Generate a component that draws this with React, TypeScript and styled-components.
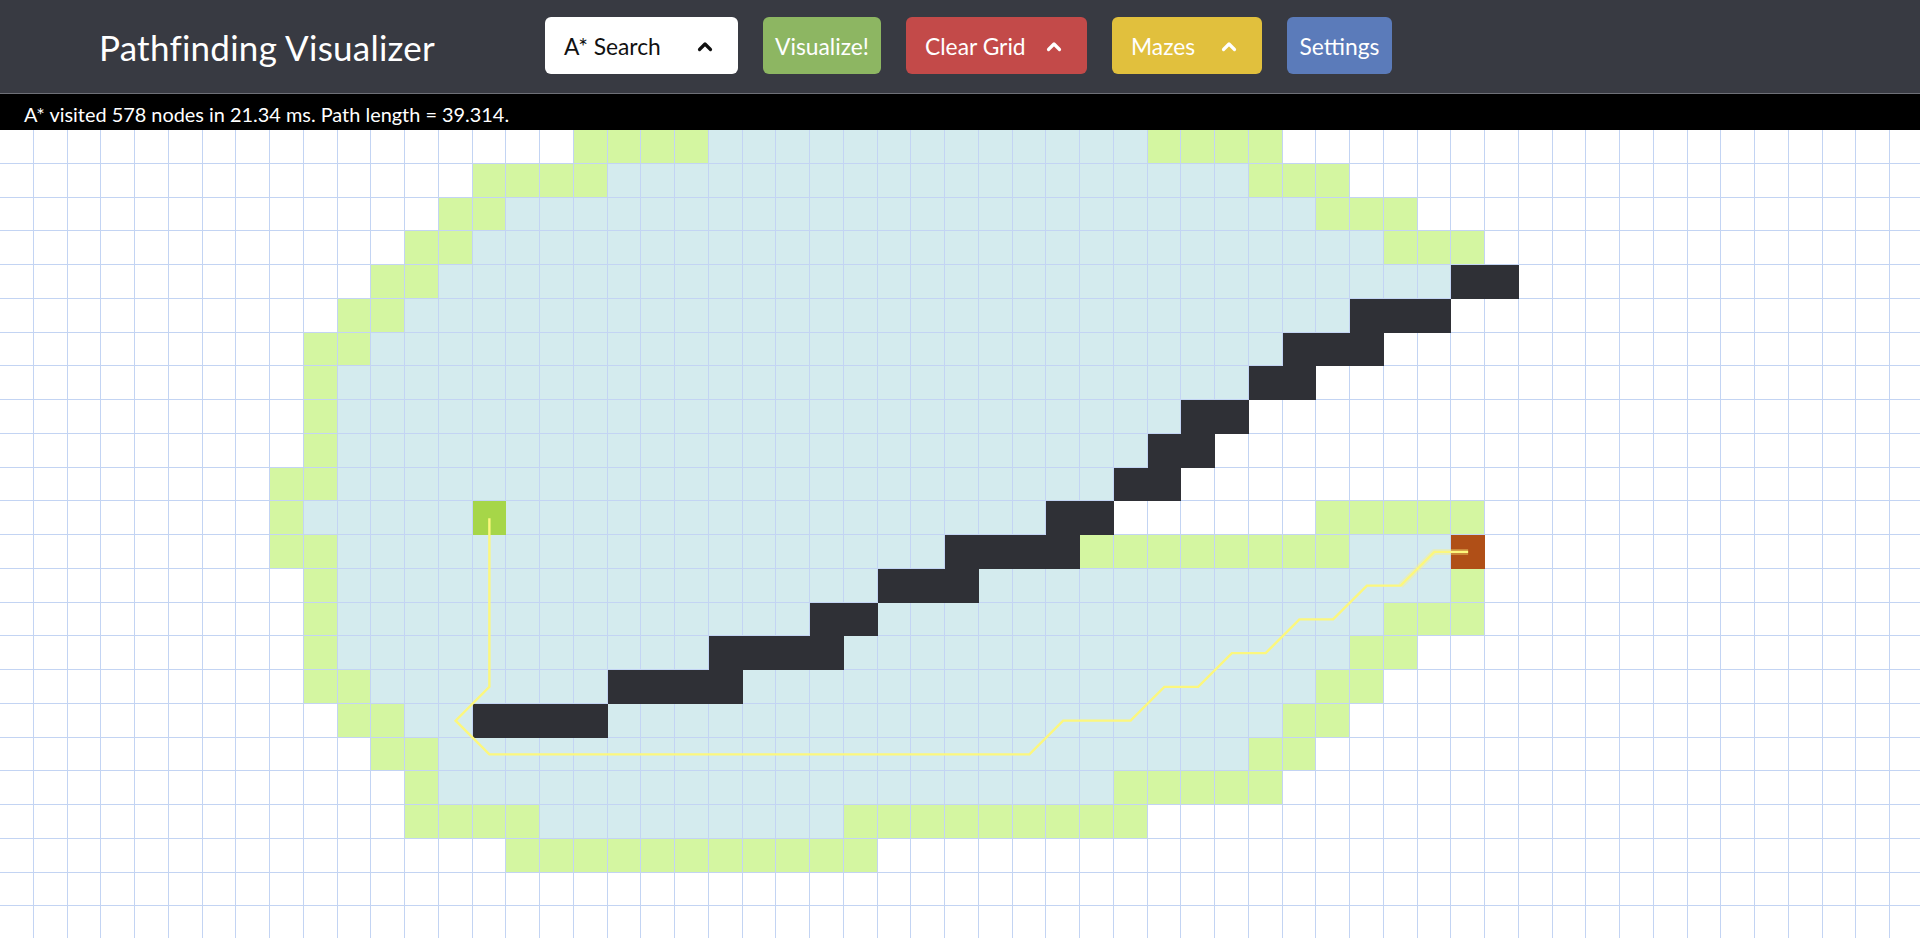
import React from "react";
import styled, { createGlobalStyle } from "styled-components";

const CELL = 33.75;
const COLS = 57;
const ROWS = 24;

type Kind = "empty" | "visited" | "frontier" | "wall" | "start" | "end";

const FONT = `"Lato", "Liberation Sans", sans-serif`;

const COLORS: Record<Kind, string> = {
  empty: "#ffffff",
  visited: "#d4ebee",
  frontier: "#d4f6a1",
  wall: "#2f3036",
  start: "#a6d648",
  end: "#b04f17",
};

const LINE = "#c3d4f3";

// [row, fromCol, toCol, kind]
const SEGMENTS: [number, number, number, Kind][] = [
  [0, 17, 20, "frontier"], [0, 21, 33, "visited"], [0, 34, 37, "frontier"],
  [1, 14, 17, "frontier"], [1, 18, 36, "visited"], [1, 37, 39, "frontier"],
  [2, 13, 14, "frontier"], [2, 15, 38, "visited"], [2, 39, 41, "frontier"],
  [3, 12, 13, "frontier"], [3, 14, 40, "visited"], [3, 41, 43, "frontier"],
  [4, 11, 12, "frontier"], [4, 13, 42, "visited"], [4, 43, 44, "wall"],
  [5, 10, 11, "frontier"], [5, 12, 39, "visited"], [5, 40, 42, "wall"],
  [6, 9, 10, "frontier"], [6, 11, 37, "visited"], [6, 38, 40, "wall"],
  [7, 9, 9, "frontier"], [7, 10, 36, "visited"], [7, 37, 38, "wall"],
  [8, 9, 9, "frontier"], [8, 10, 34, "visited"], [8, 35, 36, "wall"],
  [9, 9, 9, "frontier"], [9, 10, 33, "visited"], [9, 34, 35, "wall"],
  [10, 8, 9, "frontier"], [10, 10, 32, "visited"], [10, 33, 34, "wall"],
  [11, 8, 8, "frontier"], [11, 9, 30, "visited"], [11, 14, 14, "start"], [11, 31, 32, "wall"], [11, 39, 43, "frontier"],
  [12, 8, 9, "frontier"], [12, 10, 27, "visited"], [12, 28, 31, "wall"], [12, 32, 39, "frontier"], [12, 40, 42, "visited"], [12, 43, 43, "end"],
  [13, 9, 9, "frontier"], [13, 10, 25, "visited"], [13, 26, 28, "wall"], [13, 29, 42, "visited"], [13, 43, 43, "frontier"],
  [14, 9, 9, "frontier"], [14, 10, 23, "visited"], [14, 24, 25, "wall"], [14, 26, 40, "visited"], [14, 41, 43, "frontier"],
  [15, 9, 9, "frontier"], [15, 10, 20, "visited"], [15, 21, 24, "wall"], [15, 25, 39, "visited"], [15, 40, 41, "frontier"],
  [16, 9, 10, "frontier"], [16, 11, 17, "visited"], [16, 18, 21, "wall"], [16, 22, 38, "visited"], [16, 39, 40, "frontier"],
  [17, 10, 11, "frontier"], [17, 12, 13, "visited"], [17, 14, 17, "wall"], [17, 18, 37, "visited"], [17, 38, 39, "frontier"],
  [18, 11, 12, "frontier"], [18, 13, 36, "visited"], [18, 37, 38, "frontier"],
  [19, 12, 12, "frontier"], [19, 13, 32, "visited"], [19, 33, 37, "frontier"],
  [20, 12, 15, "frontier"], [20, 16, 24, "visited"], [20, 25, 33, "frontier"],
  [21, 15, 25, "frontier"],
];

const PATH: [number, number][] = [
  [11, 14], [16, 14], [17, 13], [18, 14], [18, 30], [17, 31], [17, 33], [16, 34],
  [16, 35], [15, 36], [15, 37], [14, 38], [14, 39], [13, 40], [13, 41], [12, 42], [12, 43],
];

function buildGrid(): Kind[][] {
  const g: Kind[][] = Array.from({ length: ROWS }, () =>
    Array.from({ length: COLS }, () => "empty" as Kind)
  );
  for (const [r, a, b, k] of SEGMENTS) {
    for (let c = a; c <= b; c++) g[r][c] = k;
  }
  return g;
}

const toPoints = (pts: [number, number][]) =>
  pts.map(([r, c]) => `${(c + 0.5) * CELL},${(r + 0.5) * CELL}`).join(" ");

const GlobalStyle = createGlobalStyle`
  html, body {
    margin: 0;
    padding: 0;
    overflow: hidden;
    background: #ffffff;
  }
  body {
    font-family: ${FONT};
  }
`;

const Page = styled.div`
  width: 1920px;
  height: 938px;
  overflow: hidden;
  display: flex;
  flex-direction: column;
`;

const Header = styled.header`
  box-sizing: border-box;
  height: 94px;
  flex-shrink: 0;
  background: #383a42;
  border-bottom: 1px solid #6e7077;
  display: flex;
  align-items: flex-start;
  padding: 17px 0 0 99px;
`;

const Brand = styled.div`
  width: 446px;
  flex-shrink: 0;
  height: 57px;
  display: flex;
  align-items: center;
  color: #ffffff;
  font-family: ${FONT};
  font-size: 35px;
  font-weight: 400;
  letter-spacing: 0.25px;
  padding-top: 3px;
  box-sizing: border-box;
`;

const Toolbar = styled.nav`
  display: flex;
  gap: 25px;
`;

type Tone = "white" | "green" | "red" | "yellow" | "blue";

const TONES: Record<Tone, { bg: string; fg: string }> = {
  white: { bg: "#ffffff", fg: "#111111" },
  green: { bg: "#8db662", fg: "#ffffff" },
  red: { bg: "#c34a49", fg: "#ffffff" },
  yellow: { bg: "#e1c03d", fg: "#ffffff" },
  blue: { bg: "#5b7bba", fg: "#ffffff" },
};

const Button = styled.button<{ $tone: Tone; $width: number; $menu?: boolean }>`
  box-sizing: border-box;
  width: ${(p) => p.$width}px;
  height: 57px;
  border: none;
  border-radius: 6px;
  background: ${(p) => TONES[p.$tone].bg};
  color: ${(p) => TONES[p.$tone].fg};
  font-family: ${FONT};
  font-size: 22.8px;
  font-weight: 400;
  display: flex;
  align-items: center;
  justify-content: ${(p) => (p.$menu ? "space-between" : "center")};
  padding: ${(p) => (p.$menu ? "0 25px 0 19px" : "0")};
  cursor: pointer;
`;

const Label = styled.span`
  line-height: 1;
  padding-top: 1px;
`;

const Chevron = ({ color }: { color: string }) => (
  <svg width="16" height="12" viewBox="0 0 16 12" aria-hidden="true">
    <polyline
      points="2.5,9.5 8,4 13.5,9.5"
      fill="none"
      stroke={color}
      strokeWidth="3.2"
      strokeLinecap="round"
      strokeLinejoin="round"
    />
  </svg>
);

const StatusBar = styled.div`
  box-sizing: border-box;
  height: 36px;
  flex-shrink: 0;
  background: #000000;
  color: #ffffff;
  font-family: ${FONT};
  font-size: 19.9px;
  line-height: 36px;
  padding: 2px 0 0 24px;
  white-space: nowrap;
`;

const Board = styled.div`
  position: relative;
  width: ${COLS * CELL}px;
  height: ${ROWS * CELL}px;
  flex-shrink: 0;
`;

const Grid = styled.div`
  display: grid;
  grid-template-columns: repeat(${COLS}, ${CELL}px);
  grid-auto-rows: ${CELL}px;
`;

const solid = (k: Kind) => k === "wall" || k === "start" || k === "end";

const Cell = styled.div<{ $kind: Kind }>`
  box-sizing: border-box;
  background: ${(p) => COLORS[p.$kind]};
  border-right: 1px solid ${(p) => (solid(p.$kind) ? COLORS[p.$kind] : LINE)};
  border-bottom: 1px solid ${(p) => (solid(p.$kind) ? COLORS[p.$kind] : LINE)};
`;

const PathLayer = styled.svg`
  position: absolute;
  left: 0;
  top: 0;
  pointer-events: none;
  overflow: visible;
`;

export default function App() {
  const grid = buildGrid();
  const w = COLS * CELL;
  const h = ROWS * CELL;
  return (
    <Page>
      <GlobalStyle />
      <Header>
        <Brand>Pathfinding Visualizer</Brand>
        <Toolbar>
          <Button $tone="white" $width={193} $menu>
            <Label>A* Search</Label>
            <Chevron color="#111111" />
          </Button>
          <Button $tone="green" $width={118}>
            <Label>Visualize!</Label>
          </Button>
          <Button $tone="red" $width={181} $menu>
            <Label>Clear Grid</Label>
            <Chevron color="#ffffff" />
          </Button>
          <Button $tone="yellow" $width={150} $menu>
            <Label>Mazes</Label>
            <Chevron color="#ffffff" />
          </Button>
          <Button $tone="blue" $width={105}>
            <Label>Settings</Label>
          </Button>
        </Toolbar>
      </Header>
      <StatusBar>A* visited 578 nodes in 21.34 ms. Path length = 39.314.</StatusBar>
      <Board>
        <Grid>
          {grid.map((row, r) =>
            row.map((k, c) => <Cell key={`${r}-${c}`} $kind={k} />)
          )}
        </Grid>
        <PathLayer width={w} height={h} viewBox={`0 0 ${w} ${h}`}>
          <polyline
            points={toPoints(PATH.slice(-3))}
            fill="none"
            stroke="#fff27a"
            strokeOpacity="0.35"
            strokeWidth="6"
            strokeLinejoin="round"
          />
          <polyline
            points={toPoints(PATH)}
            fill="none"
            stroke="#fcf77d"
            strokeWidth="2.4"
            strokeLinejoin="miter"
          />
        </PathLayer>
      </Board>
    </Page>
  );
}
